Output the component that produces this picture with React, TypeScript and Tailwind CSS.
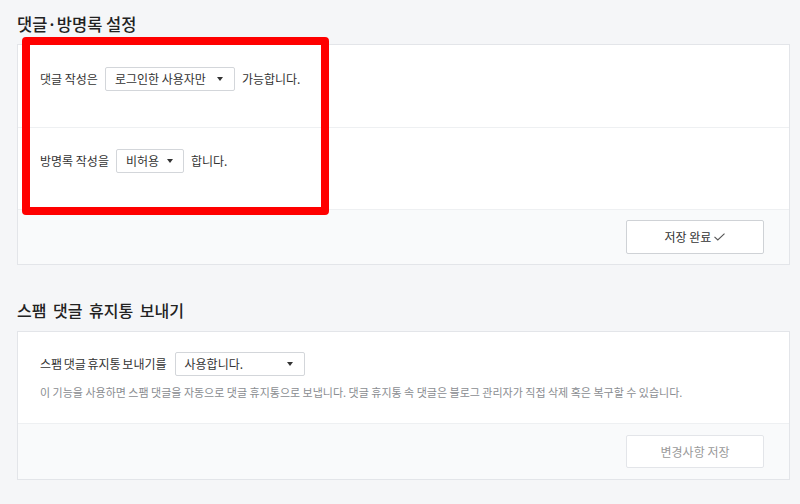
import React from 'react';

const font = { fontFamily: '"Noto Sans CJK KR", "Noto Sans", sans-serif' };

function Caret() {
  return (
    <svg width="6" height="4" viewBox="0 0 6 4" className="shrink-0">
      <path d="M0 0h6L3 4z" fill="#333" />
    </svg>
  );
}

function FakeSelect({ label, width, arrowRight = 'pr-[11px]' }: { label: string; width: string; arrowRight?: string }) {
  return (
    <div className={`flex h-[24px] ${width} items-center justify-between rounded-[2px] border border-[#d3d6da] bg-white pl-[9px] ${arrowRight}`}>
      <span className="text-[12px] text-[#333]">{label}</span>
      <Caret />
    </div>
  );
}

function CheckMark() {
  return (
    <svg width="11" height="8" viewBox="0 0 11 8" className="ml-[3px]">
      <polyline points="0.5,3.8 3.8,7 10.5,0.6" fill="none" stroke="#555" strokeWidth="1.1" />
    </svg>
  );
}

export default function App() {
  return (
    <div className="relative h-[504px] w-[800px] overflow-hidden bg-[#f5f6f8] pl-[17px]" style={font}>
      {/* 댓글·방명록 설정 */}
      <section className="pt-[12px]">
        <h1 className="mb-[7px] text-[16.5px] leading-[25px] font-medium text-[#222]">댓글·방명록 설정</h1>
        <div className="w-[773px] border border-[#e3e5e9] bg-white">
          <div className="flex h-[82px] items-start gap-[7px] px-[22px] pt-[22px] text-[12px] text-[#333]">
            <span className="leading-[24px]">댓글 작성은</span>
            <FakeSelect label="로그인한 사용자만" width="w-[130px]" />
            <span className="leading-[24px]">가능합니다.</span>
          </div>
          <div className="flex h-[82px] items-start gap-[7px] border-t border-[#eef0f2] px-[22px] pt-[21px] text-[12px] text-[#333]">
            <span className="leading-[24px]">방명록 작성을</span>
            <FakeSelect label="비허용" width="w-[68px]" arrowRight="pr-[10px]" />
            <span className="leading-[24px]">합니다.</span>
          </div>
          <div className="flex h-[55px] justify-end border-t border-[#eef0f2] bg-[#f9fafb] pt-[10px] pr-[25px]">
            <button className="flex h-[34px] w-[138px] items-center justify-center rounded-[2px] border border-[#cfd2d6] bg-white text-[12px] text-[#333]">
              저장 완료
              <CheckMark />
            </button>
          </div>
        </div>
      </section>

      {/* 스팸 댓글 휴지통 보내기 */}
      <section className="mt-[33px]">
        <h2 className="mb-[8px] text-[16px] leading-[25px] font-medium text-[#222] [word-spacing:3px]">스팸 댓글 휴지통 보내기</h2>
        <div className="w-[773px] border border-[#e3e5e9] bg-white">
          <div className="h-[91px] px-[22px] pt-[20px]">
            <div className="flex items-start gap-[8px] text-[12px] text-[#333]">
              <span className="leading-[24px] [word-spacing:-1px]">스팸 댓글 휴지통 보내기를</span>
              <FakeSelect label="사용합니다." width="w-[130px]" />
            </div>
            <p className="mt-[8px] text-[11px] leading-[16px] text-[#8a8d91]">
              이 기능을 사용하면 스팸 댓글을 자동으로 댓글 휴지통으로 보냅니다. 댓글 휴지통 속 댓글은 블로그 관리자가 직접 삭제 혹은 복구할 수 있습니다.
            </p>
          </div>
          <div className="flex h-[56px] justify-end border-t border-[#eef0f2] bg-[#f9fafb] pt-[11px] pr-[25px]">
            <button className="flex h-[33px] w-[138px] items-center justify-center rounded-[2px] border border-[#e3e5e9] bg-white text-[12px] text-[#999]">
              변경사항 저장
            </button>
          </div>
        </div>
      </section>

      {/* highlight annotation */}
      <div className="pointer-events-none absolute top-[37px] left-[22px] h-[178px] w-[307px] rounded-[4px] border-[8px] border-[#ff0000]" />
    </div>
  );
}
